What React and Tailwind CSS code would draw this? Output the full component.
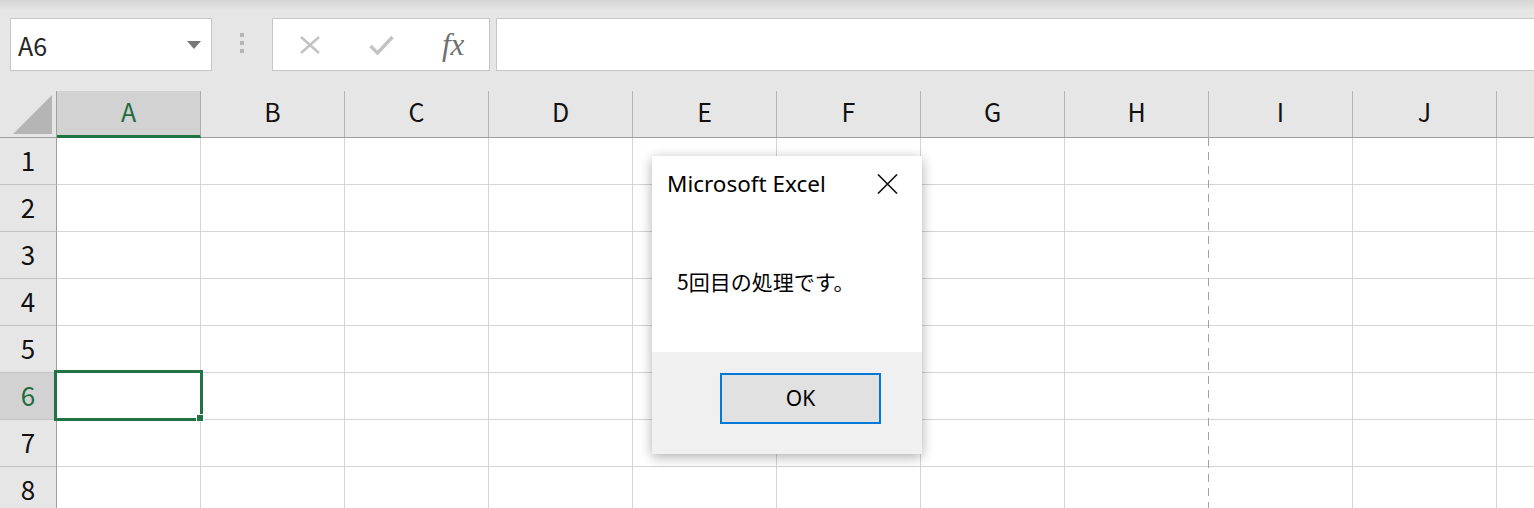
const COLS = ['A', 'B', 'C', 'D', 'E', 'F', 'G', 'H', 'I', 'J', 'K'];
const ROWS = [1, 2, 3, 4, 5, 6, 7, 8];

const JP = { fontFamily: '"Noto Sans CJK JP", "Noto Sans", sans-serif' };
const UI = { fontFamily: '"Noto Sans", "Open Sans", sans-serif' };

function NameBox() {
  return (
    <div className="ml-[10px] flex h-[53px] w-[202px] flex-none items-center justify-between border border-[#c6c6c6] bg-white pl-[7px] pr-[10px]">
      <span className="pt-[2px] text-[25px] leading-none text-[#262626]" style={JP}>A6</span>
      <svg width="14" height="8" viewBox="0 0 14 8">
        <path d="M0 0h14L7 8z" fill="#777" />
      </svg>
    </div>
  );
}

function Grip() {
  return (
    <div className="ml-[28px] mt-[15px] flex flex-none flex-col gap-[4px]">
      <div className="h-[4px] w-[4px] bg-[#b6b6b6]" />
      <div className="h-[4px] w-[4px] bg-[#b6b6b6]" />
      <div className="h-[4px] w-[4px] bg-[#b6b6b6]" />
    </div>
  );
}

function FormulaButtons() {
  return (
    <div className="ml-[28px] flex h-[53px] w-[218px] flex-none items-center border border-[#c6c6c6] bg-white pl-[25px]">
      <svg width="24" height="18" viewBox="0 0 24 18">
        <path d="M3 1L21 17M21 1L3 17" stroke="#c3c3c3" strokeWidth="2.6" fill="none" />
      </svg>
      <svg className="ml-[47px]" width="25" height="20" viewBox="0 0 25 20">
        <path d="M1.5 11L8.5 18L23.5 2" stroke="#c3c3c3" strokeWidth="3.4" fill="none" />
      </svg>
      <span
        className="ml-[48px] text-[31px] italic leading-none text-[#6f6f6f]"
        style={{ fontFamily: '"Liberation Serif", "DejaVu Serif", serif' }}
      >
        fx
      </span>
    </div>
  );
}

function Toolbar() {
  return (
    <div className="flex h-[91px] items-start bg-[linear-gradient(to_bottom,#d6d6d6,#e6e6e6_11px)] pt-[18px]">
      <NameBox />
      <Grip />
      <FormulaButtons />
      <div className="ml-[6px] h-[53px] w-[1100px] flex-none border border-r-0 border-[#c6c6c6] bg-white" />
    </div>
  );
}

function HeaderRow() {
  return (
    <div className="flex h-[47px] flex-none">
      <div className="flex h-[47px] w-[57px] flex-none items-end justify-end border-r border-b border-[#9f9f9f] pb-[3px] pr-[4px]">
        <svg width="39" height="39" viewBox="0 0 39 39">
          <path d="M39 0V39H0z" fill="#b5b5b5" />
        </svg>
      </div>
      {COLS.map((c) => {
        const sel = c === 'A';
        return (
          <div
            key={c}
            className={
              sel
                ? 'flex h-[47px] w-[144px] flex-none items-center justify-center border-r border-r-[#ababab] border-b-[3px] border-b-[#217346] bg-[#d2d2d2] pb-[2px] text-[25px] text-[#1f6b40]'
                : 'flex h-[47px] w-[144px] flex-none items-center justify-center border-r border-r-[#b3b3b3] border-b border-b-[#9f9f9f] bg-[#e6e6e6] pb-[4px] text-[25px] text-[#111]'
            }
            style={JP}
          >
            {c === 'K' ? '' : c}
          </div>
        );
      })}
    </div>
  );
}

function GridRow({ n }) {
  const sel = n === 6;
  return (
    <div className="flex h-[47px] flex-none">
      <div
        className={
          sel
            ? 'flex h-[47px] w-[57px] flex-none items-center justify-center border-r border-b border-r-[#9f9f9f] border-b-[#c4c4c4] bg-[#d2d2d2] pb-[4px] text-[26px] text-[#1f6b40]'
            : 'flex h-[47px] w-[57px] flex-none items-center justify-center border-r border-b border-r-[#9f9f9f] border-b-[#c4c4c4] bg-[#e6e6e6] pb-[4px] text-[26px] text-[#111]'
        }
        style={JP}
      >
        {n}
      </div>
      {COLS.map((c) => (
        <div
          key={c}
          className={
            c === 'H'
              ? 'h-[47px] w-[144px] flex-none border-b border-[#d4d4d4] bg-white'
              : 'h-[47px] w-[144px] flex-none border-r border-b border-[#d4d4d4] bg-white'
          }
        />
      ))}
    </div>
  );
}

function MessageBox() {
  return (
    <div className="absolute left-[652px] top-[156px] flex h-[298px] w-[270px] flex-col bg-white shadow-[0_3px_12px_rgba(0,0,0,0.32)]">
      <div className="flex h-[196px] flex-col bg-white">
        <div className="flex items-center justify-between pl-[15px] pr-[24px] pt-[17px]">
          <span className="text-[22.5px] leading-none text-black" style={UI}>Microsoft Excel</span>
          <svg width="21" height="20" viewBox="0 0 21 20">
            <path d="M1 0.5L20 19.5M20 0.5L1 19.5" stroke="#111" strokeWidth="1.6" fill="none" />
          </svg>
        </div>
        <div className="mt-[75px] pl-[25px] text-[21px] leading-none text-black" style={JP}>
          5回目の処理です。
        </div>
      </div>
      <div className="flex flex-1 items-start justify-end bg-[#f0f0f0] pr-[41px] pt-[21px]">
        <button
          className="flex h-[51px] w-[161px] items-center justify-center border-2 border-[#0078d7] bg-[#e1e1e1] text-[21px] text-black"
          style={UI}
        >
          OK
        </button>
      </div>
    </div>
  );
}

export default function App() {
  return (
    <div className="relative h-[508px] w-[1534px] overflow-hidden bg-[#e6e6e6]">
      <Toolbar />
      <div className="flex flex-col">
        <HeaderRow />
        {ROWS.map((n) => (
          <GridRow key={n} n={n} />
        ))}
      </div>

      {/* page break between H and I */}
      <div className="absolute left-[1208px] top-[138px] h-[370px] w-px bg-[repeating-linear-gradient(to_bottom,#a3a3a3_0px,#a3a3a3_8px,transparent_8px,transparent_14px)]" />

      {/* active cell A6 */}
      <div className="absolute left-[54px] top-[370px] h-[51px] w-[149px] border-[3px] border-[#217346]" />
      <div className="absolute left-[196px] top-[414px] h-[8px] w-[8px] border border-white bg-[#217346]" />

      <MessageBox />
    </div>
  );
}
